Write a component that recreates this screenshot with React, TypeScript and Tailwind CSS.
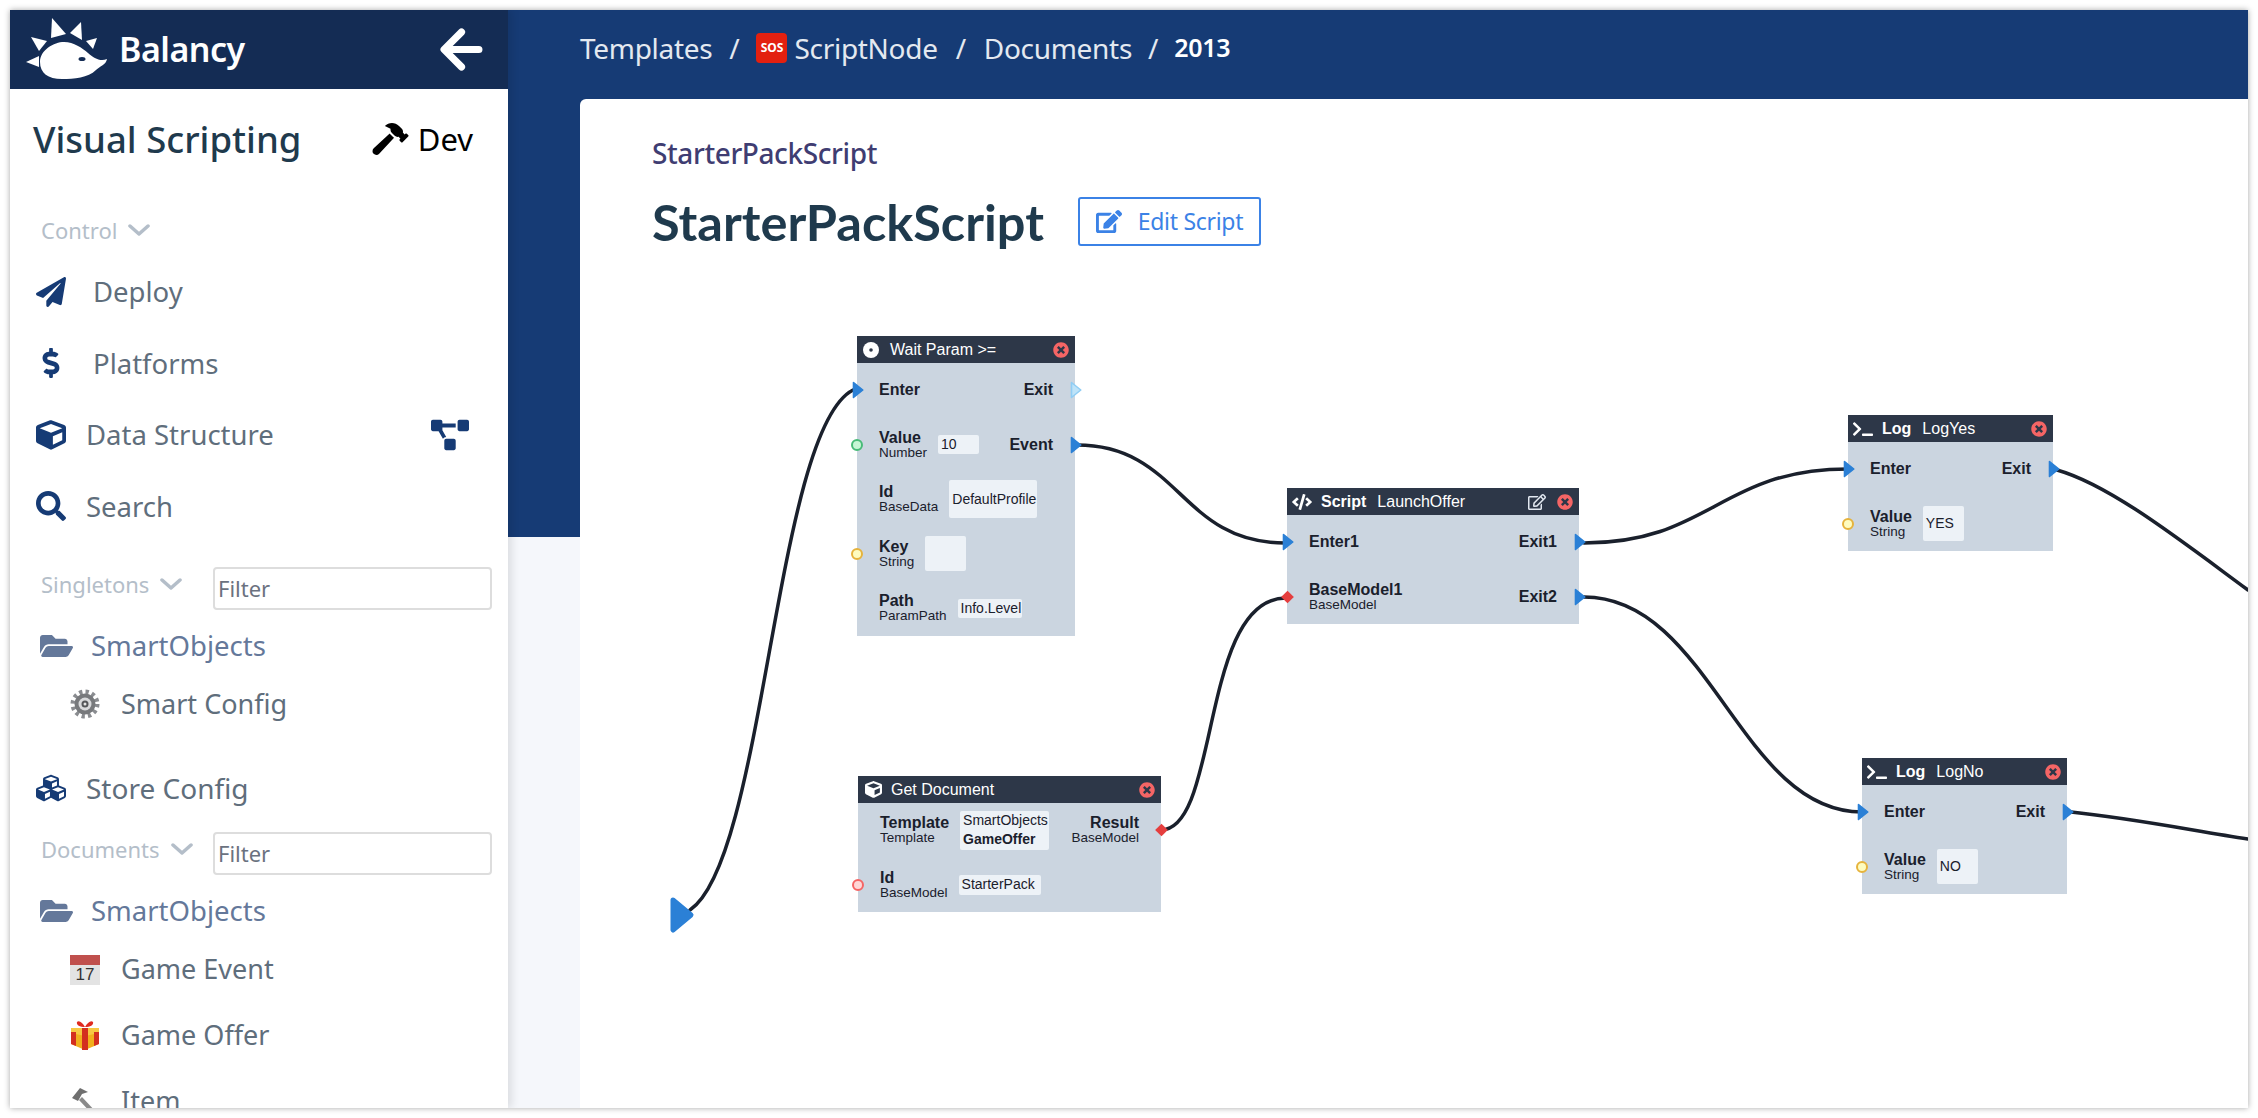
import React from 'react';
import {
  FaPaperPlane,
  FaDollarSign,
  FaCube,
  FaSearch,
  FaCubes,
  FaFolderOpen,
  FaHammer,
  FaEdit,
  FaRegEdit,
  FaTerminal,
  FaCode,
  FaProjectDiagram,
  FaTimesCircle,
} from 'react-icons/fa';

const SANS = 'font-["Noto_Sans",sans-serif]';

// --- Sidebar bits ---
const Logo = () => (
  <svg width="81" height="61" viewBox="0 0 81 61" fill="#fff" className="mt-[-3px]">
    <polygon points="26,0 40,16 25,20" />
    <polygon points="55,4 56,22 44,15" />
    <polygon points="71,20 67,31 60,23" />
    <polygon points="5,19 21,23 13,33" />
    <polygon points="0,44 13,38 13,49" />
    <path d="M14 44C14 32 28 24 38 24C48 24 56 30 62 35C68 40 74 44 81 41C80 47 74 48 70 52C62 60 48 61 36 61C22 61 14 55 14 44Z" />
    <ellipse cx="56" cy="41" rx="3.5" ry="2" fill="#142c54" />
  </svg>
);

const BackArrow = () => (
  <svg width="43" height="43" viewBox="0 0 42 42" fill="none" stroke="#fff" strokeWidth="7" strokeLinecap="round" strokeLinejoin="round">
    <path d="M38 21H5M21 4L4 21L21 38" />
  </svg>
);

const Chevron = () => (
  <svg width="22" height="13" viewBox="0 0 22 13" fill="none" stroke="currentColor" strokeWidth="3.5" strokeLinecap="round" strokeLinejoin="round">
    <path d="M2 2L11 10L20 2" />
  </svg>
);

const SectionLabel = ({ text }: { text: string }) => (
  <div className="flex items-center gap-[11px] text-[22px] text-[#b4bec9]">
    <span>{text}</span>
    <Chevron />
  </div>
);

const NavRow = ({ icon, text, gap, children }: { icon: React.ReactNode; text: string; gap: string; children?: React.ReactNode }) => (
  <div className="flex items-center h-[71.5px] pl-[26px] pr-[39px] text-[27.5px] text-[#5f6e7c]">
    <div className={`w-[30px] flex justify-center text-[#163b75] ${gap}`}>{icon}</div>
    <span>{text}</span>
    {children}
  </div>
);

const FilterRow = ({ text }: { text: string }) => (
  <div className="flex items-center justify-between h-[43px] pl-[31px] pr-[16px]">
    <div className="mt-[-8px]">
      <SectionLabel text={text} />
    </div>
    <input
      placeholder="Filter"
      className="w-[279px] h-[43px] border-2 border-[#dddddd] rounded-[4px] px-[3px] pb-[2px] text-[22px] bg-white placeholder:text-[#6b7280] outline-none"
    />
  </div>
);

const FolderRow = () => (
  <div className="flex items-center gap-[18px] h-[59px] pl-[30px] text-[27.5px] text-[#64789a]">
    <FaFolderOpen className="w-[33px] h-[30px]" />
    <span>SmartObjects</span>
  </div>
);

const DocRow = ({ icon, text, height }: { icon: React.ReactNode; text: string; height: string }) => (
  <div className={`flex items-center gap-[21px] pl-[60px] text-[27px] text-[#5f6e7c] ${height}`}>
    <div className="w-[30px] h-[30px] flex items-center justify-center">{icon}</div>
    <span>{text}</span>
  </div>
);

const GearIcon = () => (
  <svg width="30" height="30" viewBox="0 0 30 30" fill="none">
    <circle cx="15" cy="15" r="12" stroke="#8a8c90" strokeWidth="5" strokeDasharray="3.2 3.1" />
    <circle cx="15" cy="15" r="10.5" fill="#77797c" />
    <circle cx="15" cy="15" r="6.5" fill="#d9dadc" />
    <circle cx="15" cy="15" r="3.5" fill="#55575a" />
    <circle cx="15" cy="15" r="1.5" fill="#e5e5e5" />
  </svg>
);

const CalendarIcon = () => (
  <div className="w-[30px] h-[30px] flex flex-col bg-[#e3e3e3]">
    <div className="h-[10px] bg-[#c0504d]" />
    <div className="flex-1 flex items-center justify-center text-[17px] leading-none text-[#333] font-['Liberation_Sans',sans-serif]">17</div>
  </div>
);

const GiftIcon = () => (
  <svg width="30" height="30" viewBox="0 0 30 30">
    <path d="M1 8H29V24L15 30L1 24Z" fill="#f1b01c" />
    <path d="M1 8H29V13L15 16L1 13Z" fill="#f7c842" />
    <path d="M12 8H18V30H12Z" fill="#d32f1f" />
    <path d="M1 12H6V26L1 24ZM24 12H29V24L24 26Z" fill="#d32f1f" />
    <path d="M15 7C10 7 6 5 7 2C9 0 13 3 15 7C17 3 21 0 23 2C24 5 20 7 15 7Z" fill="#e02b20" />
  </svg>
);

const ItemHammer = () => (
  <svg width="30" height="30" viewBox="0 0 30 30">
    <path d="M12 10L28 27L25 30L9 13Z" fill="#8a8a8a" />
    <path d="M2 11L10 1L18 5L12 7L8 14Z" fill="#6f6f6f" />
  </svg>
);

const Sidebar = () => (
  <aside className={`w-[498px] h-full shrink-0 flex flex-col overflow-hidden bg-white shadow-[4px_0_8px_rgba(0,0,0,0.1)] z-10 ${SANS}`}>
    <div className="h-[79px] shrink-0 flex items-center justify-between bg-[#142c54] pl-[16px] pr-[25px]">
      <div className="flex items-center gap-[12px]">
        <Logo />
        <span className="text-[34px] font-semibold text-white tracking-[-0.5px]">Balancy</span>
      </div>
      <BackArrow />
    </div>

    <div className="h-[100px] shrink-0 flex items-center justify-between pl-[23px] pr-[35px]">
      <h1 className="text-[36.5px] font-medium text-[#1f3a4d]">Visual Scripting</h1>
      <div className="flex items-center gap-[9px] text-[31px] text-black">
        <FaHammer className="w-[37px] h-[32px]" />
        <span>Dev</span>
      </div>
    </div>

    <div className="h-[34px] mt-[24px] shrink-0 flex items-center pl-[31px]">
      <SectionLabel text="Control" />
    </div>

    <div className="mt-[9px] shrink-0">
      <NavRow icon={<FaPaperPlane className="w-[30px] h-[30px]" />} text="Deploy" gap="mr-[27px]" />
      <NavRow icon={<FaDollarSign className="w-[20px] h-[30px]" />} text="Platforms" gap="mr-[27px]" />
      <NavRow icon={<FaCube className="w-[30px] h-[30px]" />} text="Data Structure" gap="mr-[20px]">
        <FaProjectDiagram className="ml-auto w-[38px] h-[32px] text-[#163b75]" />
      </NavRow>
      <NavRow icon={<FaSearch className="w-[30px] h-[30px]" />} text="Search" gap="mr-[20px]" />
    </div>

    <div className="mt-[25px] shrink-0">
      <FilterRow text="Singletons" />
    </div>
    <div className="mt-[6px] shrink-0">
      <FolderRow />
      <DocRow icon={<GearIcon />} text="Smart Config" height="h-[58px]" />
    </div>

    <div className="h-[60px] mt-[25px] shrink-0 flex items-center pl-[26px] text-[28px] text-[#5f6e7c]">
      <FaCubes className="w-[30px] h-[30px] mr-[20px] text-[#163b75]" />
      <span>Store Config</span>
    </div>

    <div className="mt-[14px] shrink-0">
      <FilterRow text="Documents" />
    </div>
    <div className="mt-[6px] shrink-0">
      <FolderRow />
      <DocRow icon={<CalendarIcon />} text="Game Event" height="h-[59px]" />
      <DocRow icon={<GiftIcon />} text="Game Offer" height="h-[66px] mt-[3px]" />
      <DocRow icon={<ItemHammer />} text="Item" height="h-[67px]" />
    </div>
  </aside>
);

// --- Node graph ---
type PortKind = 'flow' | 'flowEmpty' | 'green' | 'yellow' | 'red' | 'diamond';

const Port = ({ kind, side }: { kind: PortKind; side: 'left' | 'right' }) => {
  const place = side === 'left' ? 'left-[-6px]' : 'right-[-7px]';
  if (kind === 'flow' || kind === 'flowEmpty') {
    return (
      <svg
        width="12"
        height="18"
        viewBox="0 0 12 18"
        className={`absolute top-1/2 -translate-y-1/2 z-10 ${side === 'left' ? 'left-[-5px]' : 'right-[-7px]'}`}
      >
        <path
          d="M1.5 1.5L10.8 9L1.5 16.5Z"
          fill={kind === 'flow' ? '#2b80d6' : '#bee3f8'}
          stroke={kind === 'flow' ? '#2b80d6' : '#90cdf4'}
          strokeWidth="1.6"
          strokeLinejoin="round"
        />
      </svg>
    );
  }
  if (kind === 'diamond') {
    return <div className={`absolute top-1/2 -translate-y-1/2 w-[9px] h-[9px] rotate-45 bg-[#e53e3e] z-10 ${side === 'left' ? 'left-[-4px]' : 'right-[-5px]'}`} />;
  }
  const colors = {
    green: 'border-[#48bb78] bg-[#c6f6d5]',
    yellow: 'border-[#e6b33c] bg-[#fefcbf]',
    red: 'border-[#f56565] bg-[#fed7d7]',
  }[kind];
  return <div className={`absolute top-1/2 -translate-y-1/2 w-[12px] h-[12px] rounded-full border-2 z-10 ${colors} ${place}`} />;
};

const Label = ({ name, sub, right }: { name: string; sub?: string; right?: boolean }) => (
  <div className={`flex flex-col ${right ? 'items-end' : 'items-start'}`}>
    <span className="text-[16px] leading-[16px] font-bold text-[#1a202c]">{name}</span>
    {sub && <span className="text-[13.5px] leading-[14px] text-[#1a202c]">{sub}</span>}
  </div>
);

const ValueBox = ({ className, children }: { className: string; children?: React.ReactNode }) => (
  <div className={`bg-[#edf2f7] rounded-[2px] px-[3px] text-[14px] leading-[19px] text-[#1a202c] flex flex-col justify-center ${className}`}>{children}</div>
);

const Row = ({ inPort, outPort, children }: { inPort?: PortKind; outPort?: PortKind; children?: React.ReactNode }) => (
  <div className="relative flex items-center justify-between h-[54.5px] px-[22px]">
    {inPort && <Port kind={inPort} side="left" />}
    {children}
    {outPort && <Port kind={outPort} side="right" />}
  </div>
);

const In = ({ children }: { children: React.ReactNode }) => <div className="flex items-center gap-[11px]">{children}</div>;

const Header = ({ icon, bold, name, extra }: { icon: React.ReactNode; bold?: string; name?: string; extra?: React.ReactNode }) => (
  <div className="h-[27px] flex items-center pl-[5px] pr-[6px] bg-[#2d3748] text-white text-[16px] leading-none">
    <div className="w-[20px] flex justify-center shrink-0">{icon}</div>
    {bold && <span className="ml-[9px] font-bold">{bold}</span>}
    {name && <span className={bold ? 'ml-[11px]' : 'ml-[8px]'}>{name}</span>}
    <div className="ml-auto flex items-center gap-[11px]">
      {extra}
      <FaTimesCircle className="w-[16px] h-[16px] text-[#f56565]" />
    </div>
  </div>
);

const Node = ({ className, children }: { className: string; children: React.ReactNode }) => (
  <div className={`absolute bg-[#cbd5e0] font-['Liberation_Sans',Arial,sans-serif] ${className}`}>{children}</div>
);

const DiscIcon = () => (
  <svg width="16" height="16" viewBox="0 0 16 16" className="ml-[-2px]">
    <circle cx="8" cy="8" r="8" fill="#fff" />
    <circle cx="8" cy="8" r="1.8" fill="#2d3748" />
  </svg>
);

const Wires = () => (
  <svg className="absolute inset-0 w-full h-full" fill="none" stroke="#1a202c" strokeWidth="3.5" strokeLinecap="round">
    <path d="M110 640C185 590 195 160 273 120" />
    <path d="M497 175C600 175 600 273 705 273" />
    <path d="M581 560C640 560 620 328 706 328" />
    <path d="M1004 273C1130 273 1140 199 1268 199" />
    <path d="M1004 327C1130 327 1160 542 1282 542" />
    <path d="M1477 200C1530 215 1600 270 1668 320" />
    <path d="M1491 542C1550 548 1610 560 1668 569" />
    <path d="M93 630L111 645L93 660Z" fill="#2b80d6" stroke="#2b80d6" strokeWidth="5" strokeLinejoin="round" />
  </svg>
);

const Canvas = () => (
  <div className="relative flex-1 overflow-hidden">
    <Wires />

    <Node className="left-[277px] top-[66px] w-[218px]">
      <Header icon={<DiscIcon />} name="Wait Param >=" />
      <Row inPort="flow" outPort="flowEmpty">
        <Label name="Enter" />
        <Label name="Exit" right />
      </Row>
      <Row inPort="green" outPort="flow">
        <In>
          <Label name="Value" sub="Number" />
          <ValueBox className="w-[41px] h-[19px]">10</ValueBox>
        </In>
        <Label name="Event" right />
      </Row>
      <Row>
        <In>
          <Label name="Id" sub="BaseData" />
          <ValueBox className="w-[88px] h-[38px]">DefaultProfile</ValueBox>
        </In>
      </Row>
      <Row inPort="yellow">
        <In>
          <Label name="Key" sub="String" />
          <ValueBox className="w-[41px] h-[35px]" />
        </In>
      </Row>
      <Row>
        <In>
          <Label name="Path" sub="ParamPath" />
          <ValueBox className="w-[64px] h-[19px]">Info.Level</ValueBox>
        </In>
      </Row>
    </Node>

    <Node className="left-[278px] top-[506px] w-[303px]">
      <Header icon={<FaCube className="w-[17px] h-[17px]" />} name="Get Document" />
      <Row outPort="diamond">
        <In>
          <Label name="Template" sub="Template" />
          <ValueBox className="w-[89px] h-[39px]">
            <span>SmartObjects</span>
            <span className="font-bold">GameOffer</span>
          </ValueBox>
        </In>
        <Label name="Result" sub="BaseModel" right />
      </Row>
      <Row inPort="red">
        <In>
          <Label name="Id" sub="BaseModel" />
          <ValueBox className="w-[82px] h-[20px]">StarterPack</ValueBox>
        </In>
      </Row>
    </Node>

    <Node className="left-[707px] top-[218px] w-[292px]">
      <Header
        icon={<FaCode className="w-[20px] h-[16px]" />}
        bold="Script"
        name="LaunchOffer"
        extra={<FaRegEdit className="w-[18px] h-[16px] text-[#e2e8f0]" />}
      />
      <Row inPort="flow" outPort="flow">
        <Label name="Enter1" />
        <Label name="Exit1" right />
      </Row>
      <Row inPort="diamond" outPort="flow">
        <Label name="BaseModel1" sub="BaseModel" />
        <Label name="Exit2" right />
      </Row>
    </Node>

    <Node className="left-[1268px] top-[145px] w-[205px]">
      <Header icon={<FaTerminal className="w-[22px] h-[16px]" />} bold="Log" name="LogYes" />
      <Row inPort="flow" outPort="flow">
        <Label name="Enter" />
        <Label name="Exit" right />
      </Row>
      <Row inPort="yellow">
        <In>
          <Label name="Value" sub="String" />
          <ValueBox className="w-[41px] h-[35px]">YES</ValueBox>
        </In>
      </Row>
    </Node>

    <Node className="left-[1282px] top-[488px] w-[205px]">
      <Header icon={<FaTerminal className="w-[22px] h-[16px]" />} bold="Log" name="LogNo" />
      <Row inPort="flow" outPort="flow">
        <Label name="Enter" />
        <Label name="Exit" right />
      </Row>
      <Row inPort="yellow">
        <In>
          <Label name="Value" sub="String" />
          <ValueBox className="w-[41px] h-[35px]">NO</ValueBox>
        </In>
      </Row>
    </Node>
  </div>
);

// --- Main column ---
const Breadcrumb = () => (
  <nav className="h-[76px] mb-[13px] shrink-0 flex items-center text-[28px] text-[#e4e9f0] tracking-[-0.3px]">
    <span>Templates</span>
    <span className="mx-[17px]">/</span>
    <span className="w-[31px] h-[30px] mr-[7px] rounded-[4px] bg-[#e3200f] flex items-center justify-center text-[12px] font-bold text-white tracking-normal">SOS</span>
    <span>ScriptNode</span>
    <span className="mx-[18px]">/</span>
    <span>Documents</span>
    <span className="mx-[16px]">/</span>
    <span className="text-[25px] font-semibold text-white">2013</span>
  </nav>
);

export default function App() {
  return (
    <div className="w-screen h-screen p-[10px] bg-white overflow-hidden">
      <div className="w-full h-full flex overflow-hidden shadow-[0_0_6px_rgba(0,0,0,0.35)]">
        <Sidebar />
        <main className={`flex-1 flex flex-col pl-[72px] bg-[linear-gradient(#163b75_527px,#f5f7fb_527px)] ${SANS}`}>
          <Breadcrumb />
          <section className="flex-1 flex flex-col bg-white rounded-tl-[6px] overflow-hidden">
            <div className="h-[171px] shrink-0 pl-[72px]">
              <div className="h-[108px] flex items-center text-[28px] font-medium text-[#3f3d72] tracking-[-0.4px]">StarterPackScript</div>
              <div className="mt-[-10px] flex items-center gap-[34px]">
                <h2 className="text-[50.5px] leading-none font-bold text-[#1f3a4d] font-['Lato',sans-serif]">StarterPackScript</h2>
                <button className="w-[183px] h-[49px] mt-[-2px] flex items-center justify-center gap-[16px] border-2 border-[#3b82e6] rounded-[3px] text-[23px] text-[#3b82e6] tracking-[-0.3px]">
                  <FaEdit className="w-[26px] h-[25px]" />
                  <span>Edit Script</span>
                </button>
              </div>
            </div>
            <Canvas />
          </section>
        </main>
      </div>
    </div>
  );
}
